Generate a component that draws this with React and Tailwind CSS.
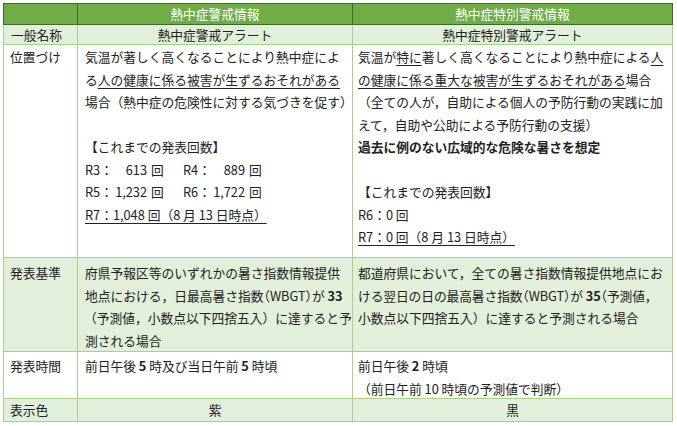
import React from 'react';

const line = 'leading-[22.5px] whitespace-nowrap';
const cell = 'border-r border-b border-[#a9d08e] overflow-hidden';
const head = 'bg-[#70ad47] border-r border-b border-t border-[#3f6b28] text-white text-center flex items-center justify-center';
const light = 'bg-[#e2efda]';
// half-width punctuation (Noto CJK "halt" feature)
const halt = "[font-feature-settings:'halt']";

const Count = ({ label, num }) => (
  <span className="inline-flex w-[98px]">
    <span className="inline-block w-[27px]">{label}</span>
    <span className="inline-block w-[35px] text-right">{num}</span>
    <span className="ml-[4px]">回</span>
  </span>
);

const App = () => {
  return (
    <div className="w-[677px] h-[426px] bg-white pt-[3px] pl-[3px] text-[12.75px] text-[#222] font-['Noto_Sans_CJK_JP',sans-serif]">
      <div className="grid grid-cols-[75px_275px_320px] grid-rows-[22px_20px_213px_94px_47px_23px]">
        {/* header */}
        <div className={`${head} border-l`} />
        <div className={head}>熱中症警戒情報</div>
        <div className={head}>熱中症特別警戒情報</div>

        {/* 一般名称 */}
        <div className={`${cell} ${light} border-l pl-[7px] flex items-center`}>一般名称</div>
        <div className={`${cell} ${light} flex items-center justify-center`}>熱中症警戒アラート</div>
        <div className={`${cell} ${light} flex items-center justify-center`}>熱中症特別警戒アラート</div>

        {/* 位置づけ */}
        <div className={`${cell} border-l pl-[6px] pt-[1px]`}>
          <div className={line}>位置づけ</div>
        </div>
        <div className={`${cell} pl-[7px] pt-[1px]`}>
          <div className={line}>気温が著しく高くなることにより熱中症によ</div>
          <div className={line}>
            る<span className="underline underline-offset-[3px]">人の健康に係る被害が生ずるおそれがある</span>
          </div>
          <div className={line}>
            場合（熱中症の危険性に対する気づきを促す<span className={halt}>）</span>
          </div>
          <div className={line}>&nbsp;</div>
          <div className={line}>【これまでの発表回数】</div>
          <div className={line}>
            <Count label="R3：" num="613" />
            <Count label="R4：" num="889" />
          </div>
          <div className={line}>
            <Count label="R5：" num="1,232" />
            <Count label="R6：" num="1,722" />
          </div>
          <div className={line}>
            <span className="underline underline-offset-[3px]">R7：1,048 回（8 月 13 日時点）</span>
          </div>
        </div>
        <div className={`${cell} pl-[5px] pt-[1px]`}>
          <div className={line}>
            気温が<span className="underline underline-offset-[3px]">特に</span>著しく高くなることにより熱中症による
            <span className="underline underline-offset-[3px]">人</span>
          </div>
          <div className={line}>
            <span className="underline underline-offset-[3px]">の健康に係る重大な被害が生ずるおそれがある</span>場合
          </div>
          <div className={line}>（全ての人が，自助による個人の予防行動の実践に加</div>
          <div className={line}>えて，自助や公助による予防行動の支援）</div>
          <div className={`${line} font-bold`}>過去に例のない広域的な危険な暑さを想定</div>
          <div className={line}>&nbsp;</div>
          <div className={line}>【これまでの発表回数】</div>
          <div className={line}>R6：0 回</div>
          <div className={line}>
            <span className="underline underline-offset-[3px]">R7：0 回（8 月 13 日時点）</span>
          </div>
        </div>

        {/* 発表基準 */}
        <div className={`${cell} ${light} border-l pl-[6px] pt-[4px]`}>
          <div className={line}>発表基準</div>
        </div>
        <div className={`${cell} ${light} pl-[7px] pt-[4px]`}>
          <div className={line}>府県予報区等のいずれかの暑さ指数情報提供</div>
          <div className={line}>
            地点における，日最高暑さ指数<span className={halt}>（</span>WBGT<span className={halt}>）</span>が{' '}
            <span className="font-bold">33</span>
          </div>
          <div className={`${line} -ml-[1px]`}>（予測値，小数点以下四捨五入）に達すると予</div>
          <div className={line}>測される場合</div>
        </div>
        <div className={`${cell} ${light} pl-[5px] pt-[4px]`}>
          <div className={line}>都道府県において，全ての暑さ指数情報提供地点にお</div>
          <div className={`${line} tracking-[-0.1px]`}>
            ける翌日の日の最高暑さ指数<span className={halt}>（</span>WBGT<span className={halt}>）</span>が{' '}
            <span className="font-bold">35</span>
            <span className={halt}>（</span>予測値<span className={halt}>，</span>
          </div>
          <div className={line}>小数点以下四捨五入）に達すると予測される場合</div>
        </div>

        {/* 発表時間 */}
        <div className={`${cell} border-l pl-[6px] pt-[3px]`}>
          <div className={line}>発表時間</div>
        </div>
        <div className={`${cell} pl-[7px] pt-[3px]`}>
          <div className={line}>
            前日午後 <span className="font-semibold">5</span> 時及び当日午前 <span className="font-semibold">5</span> 時頃
          </div>
        </div>
        <div className={`${cell} pl-[5px] pt-[3px]`}>
          <div className={line}>
            前日午後 <span className="font-semibold">2</span> 時頃
          </div>
          <div className={line}>（前日午前 10 時頃の予測値で判断）</div>
        </div>

        {/* 表示色 */}
        <div className={`${cell} ${light} border-l pl-[6px] flex items-center`}>表示色</div>
        <div className={`${cell} ${light} flex items-center justify-center`}>紫</div>
        <div className={`${cell} ${light} flex items-center justify-center`}>黒</div>
      </div>
    </div>
  );
};

export default App;
